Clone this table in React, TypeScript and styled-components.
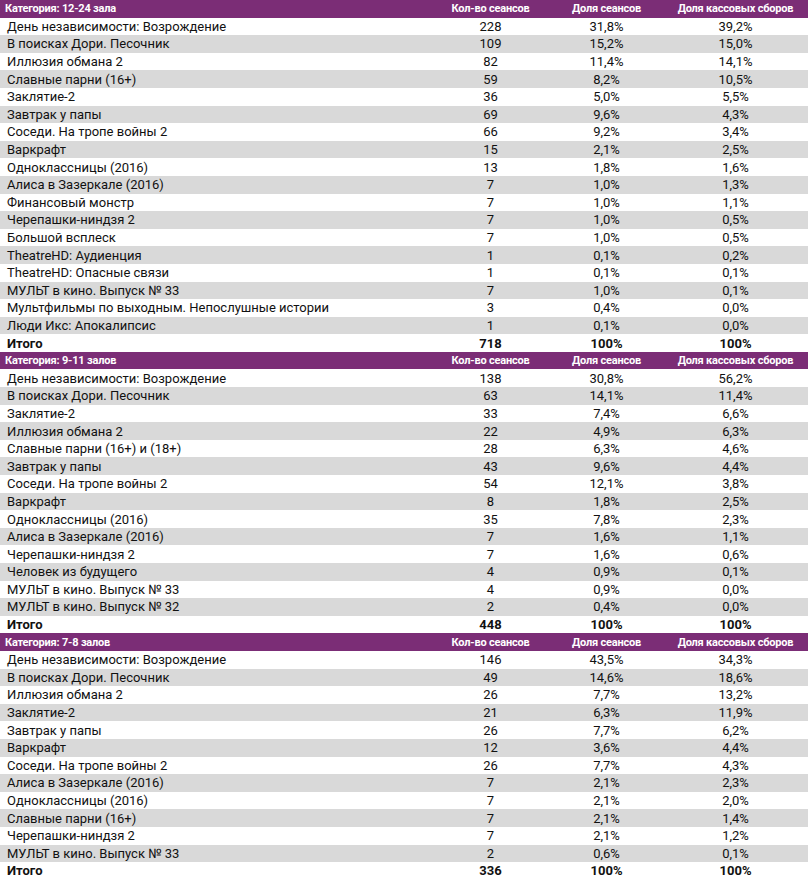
import React from "react";
import styled, { createGlobalStyle } from "styled-components";

const Global = createGlobalStyle`
  html, body { margin: 0; padding: 0; background: #ffffff; }
  body { font-family: Roboto, "Liberation Sans", sans-serif; color: #000; }
`;

type Film = [string, string, string, string];
type Block = { title: string; films: Film[]; total: [string, string, string] };

const blocks: Block[] = [
  {
    title: "Категория: 12-24 зала",
    films: [
      ["День независимости: Возрождение", "228", "31,8%", "39,2%"],
      ["В поисках Дори. Песочник", "109", "15,2%", "15,0%"],
      ["Иллюзия обмана 2", "82", "11,4%", "14,1%"],
      ["Славные парни (16+)", "59", "8,2%", "10,5%"],
      ["Заклятие-2", "36", "5,0%", "5,5%"],
      ["Завтрак у папы", "69", "9,6%", "4,3%"],
      ["Соседи. На тропе войны 2", "66", "9,2%", "3,4%"],
      ["Варкрафт", "15", "2,1%", "2,5%"],
      ["Одноклассницы (2016)", "13", "1,8%", "1,6%"],
      ["Алиса в Зазеркале (2016)", "7", "1,0%", "1,3%"],
      ["Финансовый монстр", "7", "1,0%", "1,1%"],
      ["Черепашки-ниндзя 2", "7", "1,0%", "0,5%"],
      ["Большой всплеск", "7", "1,0%", "0,5%"],
      ["TheatreHD: Аудиенция", "1", "0,1%", "0,2%"],
      ["TheatreHD: Опасные связи", "1", "0,1%", "0,1%"],
      ["МУЛЬТ в кино. Выпуск № 33", "7", "1,0%", "0,1%"],
      ["Мультфильмы по выходным. Непослушные истории", "3", "0,4%", "0,0%"],
      ["Люди Икс: Апокалипсис", "1", "0,1%", "0,0%"],
    ],
    total: ["718", "100%", "100%"],
  },
  {
    title: "Категория: 9-11 залов",
    films: [
      ["День независимости: Возрождение", "138", "30,8%", "56,2%"],
      ["В поисках Дори. Песочник", "63", "14,1%", "11,4%"],
      ["Заклятие-2", "33", "7,4%", "6,6%"],
      ["Иллюзия обмана 2", "22", "4,9%", "6,3%"],
      ["Славные парни (16+) и (18+)", "28", "6,3%", "4,6%"],
      ["Завтрак у папы", "43", "9,6%", "4,4%"],
      ["Соседи. На тропе войны 2", "54", "12,1%", "3,8%"],
      ["Варкрафт", "8", "1,8%", "2,5%"],
      ["Одноклассницы (2016)", "35", "7,8%", "2,3%"],
      ["Алиса в Зазеркале (2016)", "7", "1,6%", "1,1%"],
      ["Черепашки-ниндзя 2", "7", "1,6%", "0,6%"],
      ["Человек из будущего", "4", "0,9%", "0,1%"],
      ["МУЛЬТ в кино. Выпуск № 33", "4", "0,9%", "0,0%"],
      ["МУЛЬТ в кино. Выпуск № 32", "2", "0,4%", "0,0%"],
    ],
    total: ["448", "100%", "100%"],
  },
  {
    title: "Категория: 7-8 залов",
    films: [
      ["День независимости: Возрождение", "146", "43,5%", "34,3%"],
      ["В поисках Дори. Песочник", "49", "14,6%", "18,6%"],
      ["Иллюзия обмана 2", "26", "7,7%", "13,2%"],
      ["Заклятие-2", "21", "6,3%", "11,9%"],
      ["Завтрак у папы", "26", "7,7%", "6,2%"],
      ["Варкрафт", "12", "3,6%", "4,4%"],
      ["Соседи. На тропе войны 2", "26", "7,7%", "4,3%"],
      ["Алиса в Зазеркале (2016)", "7", "2,1%", "2,3%"],
      ["Одноклассницы (2016)", "7", "2,1%", "2,0%"],
      ["Славные парни (16+)", "7", "2,1%", "1,4%"],
      ["Черепашки-ниндзя 2", "7", "2,1%", "1,2%"],
      ["МУЛЬТ в кино. Выпуск № 33", "2", "0,6%", "0,1%"],
    ],
    total: ["336", "100%", "100%"],
  },
];

const Table = styled.div`
  width: 808px;
  display: flex;
  flex-direction: column;
`;

const Section = styled.section`
  display: flex;
  flex-direction: column;
`;

const gridCols = "431px 119px 113px 145px";

const HeaderRow = styled.div`
  display: grid;
  grid-template-columns: ${gridCols};
  height: 17.6px;
  align-items: center;
  background: #7b2d76;
  color: #ffffff;
  font-weight: 700;
  font-size: 11px;
  letter-spacing: -0.2px;
`;

const Row = styled.div<{ $shade?: boolean; $total?: boolean }>`
  display: grid;
  grid-template-columns: ${gridCols};
  height: 17.6px;
  align-items: center;
  background: ${(p) => (p.$shade ? "#d9d9d9" : "#ffffff")};
  font-size: 13px;
  font-weight: ${(p) => (p.$total ? 700 : 400)};
  color: #111;
`;

const NameCell = styled.div<{ $head?: boolean }>`
  padding-left: ${(p) => (p.$head ? "5px" : "7px")};
  white-space: nowrap;
  line-height: 17px;
`;

const NumCell = styled.div`
  text-align: center;
  white-space: nowrap;
  line-height: 17px;
`;

export default function App() {
  return (
    <>
      <Global />
      <Table>
        {blocks.map((b) => (
          <Section key={b.title}>
            <HeaderRow>
              <NameCell $head>{b.title}</NameCell>
              <NumCell>Кол-во сеансов</NumCell>
              <NumCell>Доля сеансов</NumCell>
              <NumCell>Доля кассовых сборов</NumCell>
            </HeaderRow>
            {b.films.map((f, i) => (
              <Row key={f[0] + i} $shade={i % 2 === 1}>
                <NameCell>{f[0]}</NameCell>
                <NumCell>{f[1]}</NumCell>
                <NumCell>{f[2]}</NumCell>
                <NumCell>{f[3]}</NumCell>
              </Row>
            ))}
            <Row $total>
              <NameCell>Итого</NameCell>
              <NumCell>{b.total[0]}</NumCell>
              <NumCell>{b.total[1]}</NumCell>
              <NumCell>{b.total[2]}</NumCell>
            </Row>
          </Section>
        ))}
      </Table>
    </>
  );
}
